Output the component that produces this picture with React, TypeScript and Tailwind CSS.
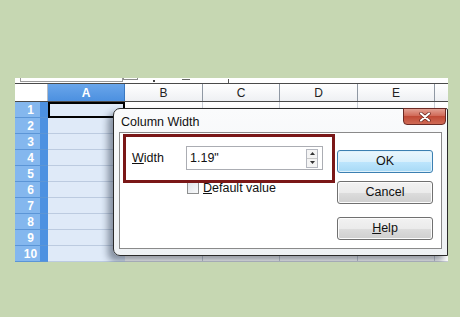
import React from 'react';

const columns = [
  { name: 'B', width: 'w-[78px]' },
  { name: 'C', width: 'w-[77px]' },
  { name: 'D', width: 'w-[78px]' },
  { name: 'E', width: 'w-[77px]' },
];

const rows = [1, 2, 3, 4, 5, 6, 7, 8, 9, 10];

const font = { fontFamily: '"Liberation Sans", Arial, sans-serif' };

const DialogButton: React.FC<{ children: React.ReactNode; primary?: boolean }> = ({ children, primary }) => (
  <div
    className={
      primary
        ? 'w-[96px] h-[23px] rounded-[3px] border border-[#3c7fb1] bg-[linear-gradient(#eaf6fd,#d9f0fc_50%,#bee6fd_50%,#a7d9f5)] flex items-center justify-center text-[12.5px] text-[#111] shadow-[inset_0_0_0_1px_#dff1fb]'
        : 'w-[96px] h-[23px] rounded-[3px] border border-[#707070] bg-[linear-gradient(#f2f2f2,#ebebeb_50%,#dddddd_50%,#cfcfcf)] flex items-center justify-center text-[12.5px] text-[#111] shadow-[inset_0_0_0_1px_#fcfcfc]'
    }
  >
    {children}
  </div>
);

const App: React.FC = () => {
  return (
    <div className="w-[460px] h-[317px] bg-[#c6d7b2] pt-[78px] pl-[15px] overflow-hidden" style={font}>
      <div className="relative w-[433px] h-[184px] bg-white overflow-hidden flex flex-col">
        {/* toolbar strip */}
        <div className="h-[9px] flex items-start relative">
          <div className="ml-[5px] w-[103px] h-[4px] border-b border-x border-[#9a9a9a]" />
          <div className="w-[15px] h-[2px] border-b border-x border-[#8a8a8a]" />
          <div className="ml-[15px] mt-[2px] w-[2px] h-[2px] bg-[#444]" />
          <div className="ml-[27px] mt-[1px] w-[8px] h-[1px] bg-[#666]" />
          <div className="ml-[38px] mt-[1px] w-[1px] h-[4px] bg-[#555]" />
        </div>

        {/* column headers */}
        <div className="h-[19px] flex border-y border-[#4a4a4a] text-[12px]">
          <div className="w-[33px] bg-white border-r border-[#b6bcc4]" />
          <div className="w-[77px] bg-[linear-gradient(#6aa6ea,#4c90e0)] text-white font-bold flex items-center justify-center border-r border-[#3a78c0]">
            A
          </div>
          {columns.map((c) => (
            <div
              key={c.name}
              className={`${c.width} bg-[linear-gradient(#ffffff,#eef0f3)] text-[#222] flex items-center justify-center border-r border-[#8f98a3]`}
            >
              {c.name}
            </div>
          ))}
          <div className="flex-1 bg-[linear-gradient(#ffffff,#eef0f3)]" />
        </div>

        {/* rows */}
        {rows.map((r) => (
          <div key={r} className="h-[16px] shrink-0 flex">
            <div className="w-[33px] bg-[linear-gradient(to_right,#84b7ee_76%,#4d91e1_76%)] border-b border-[#5b95d6] text-white font-bold text-[12px] flex items-center justify-center pr-[2px]">
              {r}
            </div>
            <div
              className={
                r === 1
                  ? 'w-[77px] bg-[#dfeaf8] border-2 border-black'
                  : 'w-[77px] bg-[#dfeaf8] border-b border-[#bccbe0]'
              }
            />
            {columns.map((c) => (
              <div key={c.name} className={`${c.width} border-r border-b border-[#c9ced6] bg-white`} />
            ))}
            <div className="flex-1 border-b border-[#c9ced6]" />
          </div>
        ))}

        {/* dialog */}
        <div className="absolute left-[98px] top-[30px] w-[335px] h-[148px] rounded-l-[7px] rounded-tr-[2px] border border-[#2a2a2a] bg-[linear-gradient(#fafbfc,#eef1f4)] shadow-[-5px_5px_7px_rgba(20,30,50,0.45)] flex flex-col">
          <div className="h-[23px] flex items-center pt-[4px] pl-[7px] text-[12.5px] text-[#111] relative">
            Column Width
            <div className="absolute right-[1px] -top-[1px] w-[43px] h-[17px] rounded-b-[4px] border border-[#6b2a24] bg-[linear-gradient(#e2a092,#cf6452_50%,#c04a36_50%,#cf6a55)] flex items-center justify-center">
              <svg width="12" height="10" viewBox="0 0 12 10">
                <path d="M2 1.5 L10 8.5 M10 1.5 L2 8.5" stroke="#5a1a12" strokeWidth="3.4" strokeLinecap="round" />
                <path d="M2 1.5 L10 8.5 M10 1.5 L2 8.5" stroke="#ffffff" strokeWidth="2.2" strokeLinecap="round" />
              </svg>
            </div>
          </div>
          <div className="mx-[5px] mb-[6px] flex-1 bg-white border border-[#8a8a8a] flex pt-[13px] pl-[12px]">
            <div className="flex flex-col">
              <div className="flex items-center">
                <div className="w-[54px] text-[12.5px] text-[#111]">
                  <span className="underline">W</span>idth
                </div>
                <div className="w-[137px] h-[24px] border border-[#abadb3] flex items-center pl-[3px] pr-[4px] text-[12.5px] text-[#111]">
                  <span className="flex-1">1.19"</span>
                  <div className="w-[12px] h-[19px] border border-[#b5b8c0] flex flex-col bg-[#f4f4f4]">
                    <div className="flex-1 flex items-center justify-center border-b border-[#c8c8c8]">
                      <svg width="5" height="3" viewBox="0 0 5 3"><path d="M0 3 L2.5 0 L5 3Z" fill="#333" /></svg>
                    </div>
                    <div className="flex-1 flex items-center justify-center">
                      <svg width="5" height="3" viewBox="0 0 5 3"><path d="M0 0 L2.5 3 L5 0Z" fill="#333" /></svg>
                    </div>
                  </div>
                </div>
              </div>
              <div className="flex items-center mt-[9px] pl-[55px]">
                <div className="w-[12px] h-[12px] border border-[#8e8f8f] bg-[linear-gradient(135deg,#dfe3e8,#f8f9fa)]" />
                <div className="ml-[4px] text-[12.5px] text-[#111]">
                  <span className="underline">D</span>efault value
                </div>
              </div>
            </div>
            <div className="ml-[14px] mt-[4px] flex flex-col">
              <DialogButton primary>OK</DialogButton>
              <div className="mt-[8px]">
                <DialogButton>Cancel</DialogButton>
              </div>
              <div className="mt-[13px]">
                <DialogButton>
                  <span>
                    <span className="underline">H</span>elp
                  </span>
                </DialogButton>
              </div>
            </div>
          </div>
        </div>

        {/* red highlight annotation */}
        <div className="absolute left-[108px] top-[56px] w-[212px] h-[49px] border-[3px] border-[#7a1717]" />
      </div>
    </div>
  );
};

export default App;
